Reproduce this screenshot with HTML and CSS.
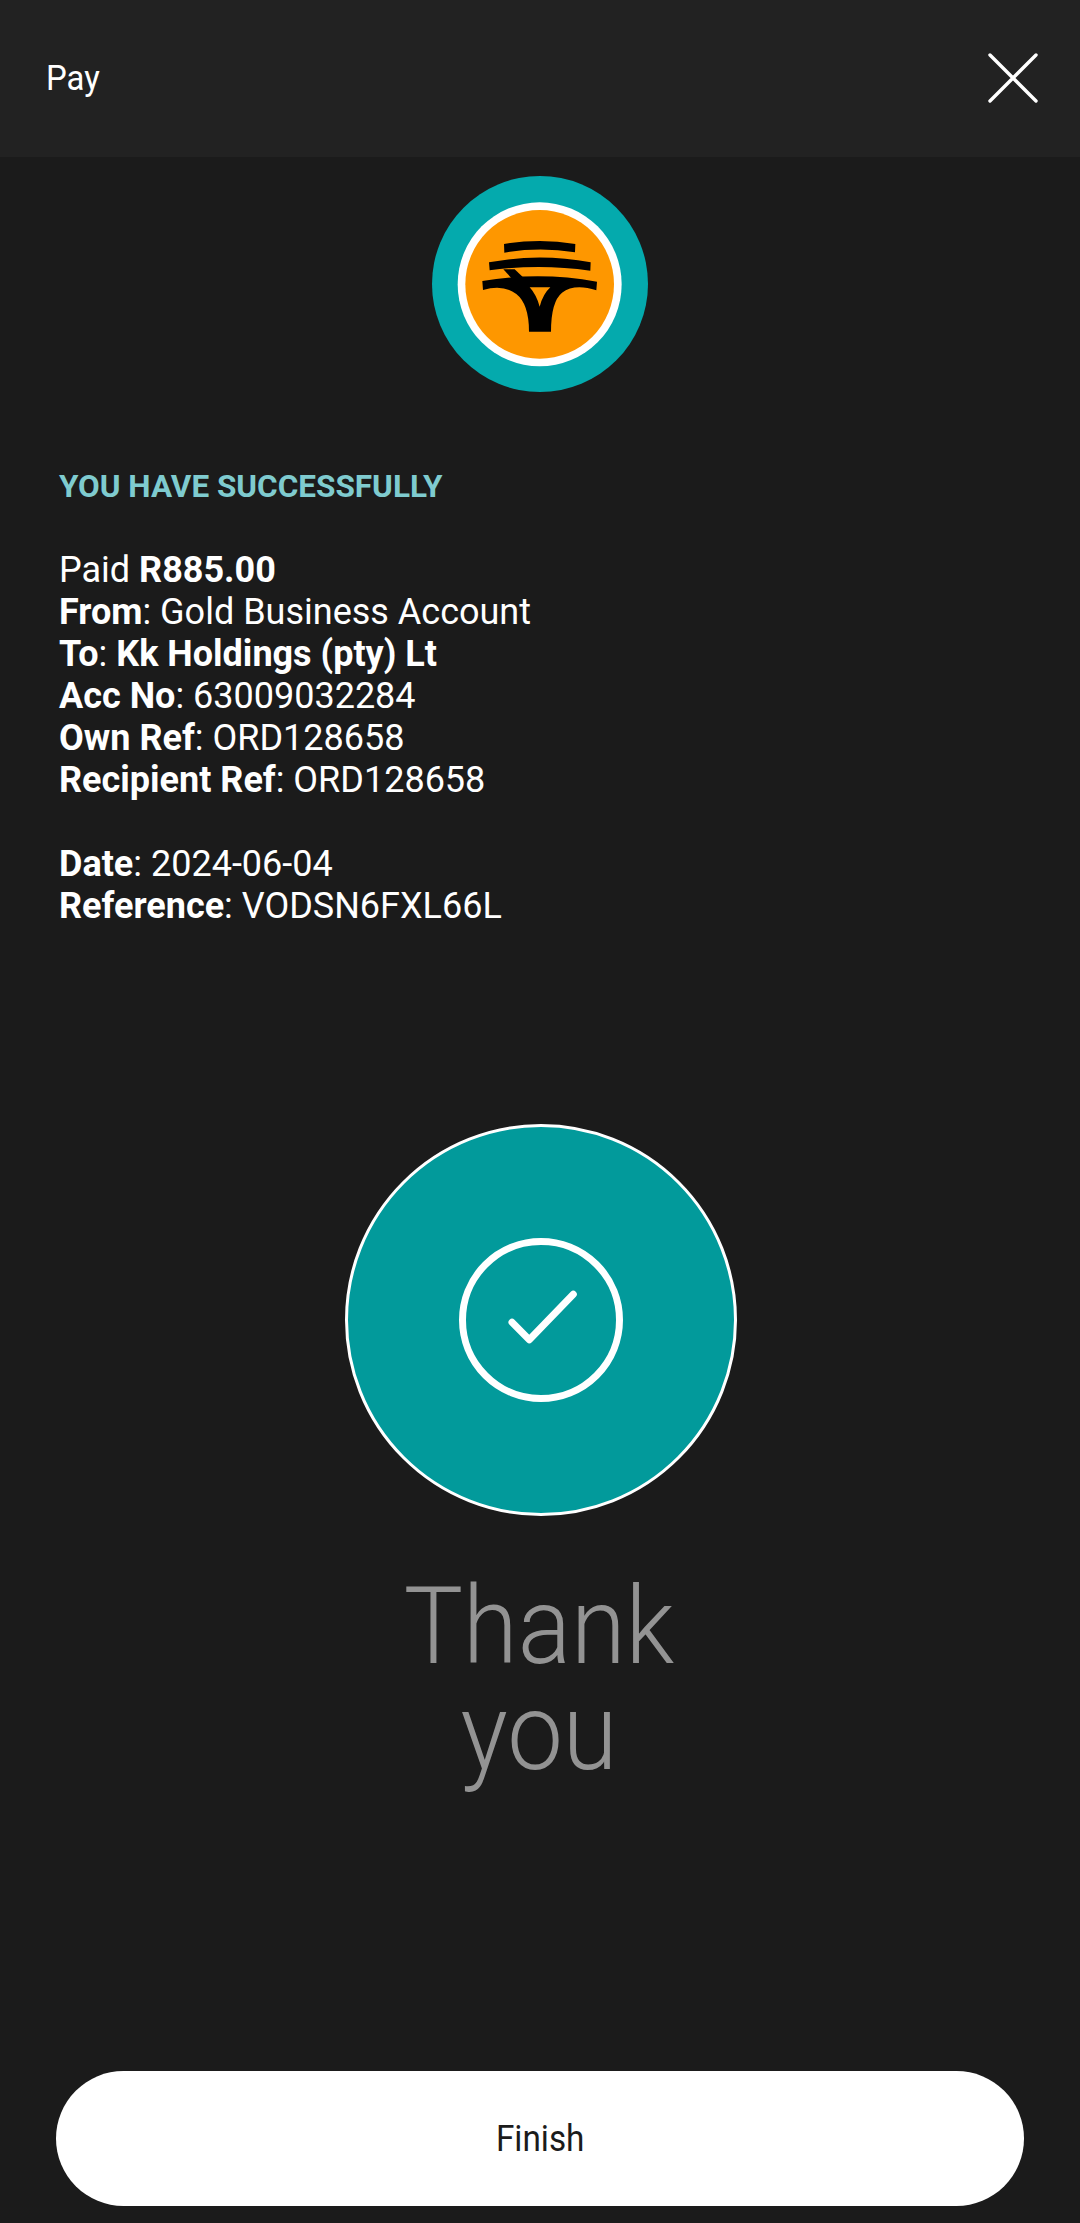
FILE: index.html
```html
<!DOCTYPE html>
<html lang="en">
<head>
<meta charset="utf-8">
<title>Pay</title>
<link rel="stylesheet" href="styles.css">
</head>
<body>
<div class="screen">
  <header class="topbar">
    <span class="topbar-title">Pay</span>
    <svg class="close-icon" viewBox="0 0 50 50" aria-label="Close"><path d="M2 2 25 25M48 2 25 25M2 48 25 25M48 48 25 25"/></svg>
  </header>
  <div class="logo-row">
    <svg class="logo" viewBox="97 78 648 648">
      <circle cx="421" cy="402" r="324" fill="#04aaad"/>
      <circle cx="420" cy="403" r="246" fill="#fff"/>
      <circle cx="420" cy="403" r="223" fill="#fe9700"/>
      <g transform="translate(225 240)">
        <path d="M88 42Q195 24 302 42L301 67Q195 50 89 68Z"/>
        <path d="M43 97Q195 68 348 97L347 122Q195 100 45 121Z"/>
        <path fill-rule="evenodd" d="M23 153Q195 124 367 155L365 181Q300 160 262 188Q229 215 229 305H163Q163 222 125 192Q85 162 25 180ZM165 172H227Q205 192 195 230Q185 194 165 172Z"/>
        <path d="M86 118H120L160 156 130 166Z"/>
      </g>
    </svg>
  </div>
  <section class="details">
    <h2 class="details-heading">YOU HAVE SUCCESSFULLY</h2>
    <p class="details-block">Paid <b>R885.00</b><br>
    <b>From</b>: Gold Business Account<br>
    <b>To</b>: <b>Kk Holdings (pty) Lt</b><br>
    <b>Acc No</b>: 63009032284<br>
    <b>Own Ref</b>: ORD128658<br>
    <b>Recipient Ref</b>: ORD128658</p>
    <p class="details-block details-gap"><b>Date</b>: 2024-06-04<br>
    <b>Reference</b>: VODSN6FXL66L</p>
  </section>
  <div class="success">
    <div class="success-disc">
      <svg class="success-icon" viewBox="0 0 164 164">
        <circle cx="82" cy="82" r="78.5"/>
        <path class="success-check" d="M53 84.3 70.3 101.7 114.3 56.3"/>
      </svg>
    </div>
    <div class="thanks">Thank<br>you</div>
  </div>
  <button class="finish" type="button"><span class="finish-label">Finish</span></button>
</div>
</body>
</html>
```
FILE: styles.css
```css
* { box-sizing: border-box; }
html, body { margin: 0; padding: 0; }
body { background: #1b1b1b; font-family: Roboto, "Liberation Sans", sans-serif; color: #fff; }
.screen { position: relative; width: 1080px; height: 2223px; display: flex; flex-direction: column; background: #1b1b1b; overflow: hidden; }
.topbar { height: 157px; flex: none; background: #222222; display: flex; align-items: center; justify-content: space-between; padding: 0 42px 0 46px; }
.topbar-title { display: inline-block; font-size: 35px; font-weight: 400; transform: scaleX(.94); transform-origin: left center; }
.close-icon { width: 50px; height: 50px; fill: none; stroke: #fff; stroke-width: 3.4; stroke-linecap: round; margin-top: -1px; }
.logo-row { display: flex; justify-content: center; padding-top: 19px; }
.logo { width: 216px; height: 216px; display: block; fill: #000; }
.details { padding: 77px 0 0 59px; }
.details-heading { margin: 0; font-size: 31.5px; line-height: 36px; font-weight: 700; color: #7fcbcf; }
.details-block { margin: 0; font-size: 36px; line-height: 42px; }
.details-block:first-of-type { margin-top: 44px; }
.details-block b { font-weight: 700; }
.details-gap { margin-top: 42px; }
.success { display: flex; flex-direction: column; align-items: center; margin-top: 197px; padding-left: 2px; }
.success-disc { width: 392px; height: 392px; border-radius: 50%; background: #029a9b; border: 3px solid #fff; display: flex; align-items: center; justify-content: center; }
.success-icon { width: 164px; height: 164px; fill: none; stroke: #fff; stroke-width: 7; stroke-linecap: round; stroke-linejoin: round; }
.thanks { margin: 57px 4px 0 0; font-size: 108px; line-height: 106px; font-weight: 300; color: #939393; text-align: center; transform: scaleX(.92); }
.finish { position: absolute; left: 56px; top: 2071px; width: 968px; height: 135px; border: 0; border-radius: 68px; background: #fff; color: #1b1b1b; font-family: Roboto, sans-serif; font-size: 37px; font-weight: 400; }
.finish-label { display: inline-block; transform: scaleX(.9); }
```
